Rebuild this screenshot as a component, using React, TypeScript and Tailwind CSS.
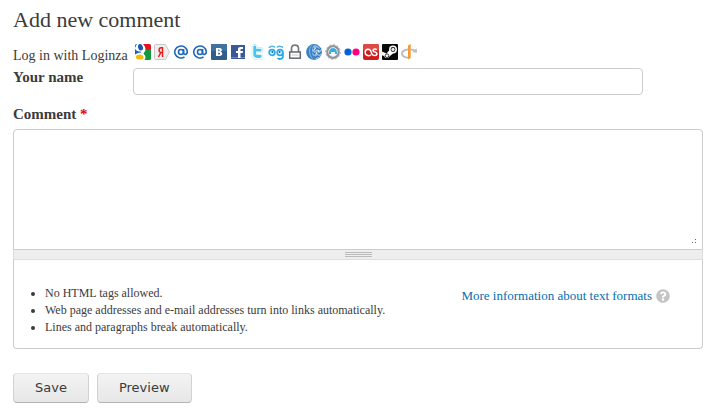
import type { ReactNode } from 'react'
import { FaQuestionCircle } from 'react-icons/fa'

const providers: { name: string; icon: ReactNode }[] = [
    {
        name: 'Google',
        icon: (
            <>
                <path d="M8 0h6.500A1.500 1.500 0 0 1 16 1.500V6h-5.500C10.500 3 9.500 1.500 8 0z" fill="#e8101c" />
                <path d="M10.500 5.500H16v9a1.500 1.500 0 0 1-1.500 1.500H9.500c1.500-2 1.200-4-.3-5.500-1-1-.5-1.700.3-2.500.8-.8 1-1.500 1-2.500z" fill="#109a3c" />
                <ellipse cx="5.500" cy="3.300" rx="2.400" ry="3.300" transform="rotate(-15 5.500 3.300)" fill="#1c57b0" />
                <path d="M0 4.500c.8 1.800 2.500 3 4.500 3 .8 0 1.500.3 1.700 1C4 8.500 2 9.200 0 10.500z" fill="#2360bd" />
                <path d="M0 1.500A1.500 1.500 0 0 1 1.500 0h.8C1.500.8 1 1.500.8 2.800L0 3.500z" fill="#2f6fc4" />
                <ellipse cx="4.700" cy="13" rx="3.800" ry="2.600" fill="#f9b80e" />
            </>
        ),
    },
    {
        name: 'Yandex',
        icon: (
            <>
                <path d="M1.500.5h10L15.500 8l-4 7.500h-10a1 1 0 0 1-1-1v-13a1 1 0 0 1 1-1z" fill="#efefef" stroke="#c9c9c9" />
                <path d="M8.500 3v10M8.500 3.700H7C4.500 3.700 4.500 8.500 7 8.500h1.500M6.800 8.500L4.500 13" fill="none" stroke="#ee1c1c" strokeWidth="1.500" />
            </>
        ),
    },
    { name: 'Mail.ru', icon: <AtSign /> },
    { name: 'Mail.ru Agent', icon: <AtSign /> },
    {
        name: 'VKontakte',
        icon: (
            <>
                <rect width="16" height="16" rx="1" fill="#315d88" />
                <rect width="16" height="7" rx="1" fill="#41719f" />
                <path d="M5 4h3.500c3 0 3 3.300.8 3.800 2.900.4 2.700 4.200-.6 4.200H5zM7.200 5.500v1.700h.8c1 0 1-1.700 0-1.700zM7.200 8.700v1.800h1c1.200 0 1.200-1.800 0-1.800z" fill="#fff" fillRule="evenodd" />
            </>
        ),
    },
    {
        name: 'Facebook',
        icon: (
            <>
                <rect x="1" y="1" width="14" height="14" fill="#3b5998" />
                <path d="M1 13h14v1H1z" fill="#6d84b4" />
                <path d="M8 14V9H6V7h2V5.500C8 3.700 9 3 10.500 3H13v2h-1.500c-.8 0-1 .3-1 1v1H13l-.3 2h-2.200v5z" fill="#fff" />
            </>
        ),
    },
    {
        name: 'Twitter',
        icon: (
            <>
                <path d="M5.500 3v7.500c0 1.800.8 2.700 2.500 2.700h3.500M5.500 6H11.500" fill="none" stroke="#cdebf4" strokeWidth="6" strokeLinecap="round" strokeLinejoin="round" />
                <path d="M5.500 3v7.500c0 1.800.8 2.700 2.500 2.700h3.500M5.500 6.200H11.500" fill="none" stroke="#f8feff" strokeWidth="4.400" strokeLinecap="round" />
                <path d="M5.700 3v7c0 1.800.8 2.500 2.500 2.500h3M5.700 6.200H11.200" fill="none" stroke="#4cc4ea" strokeWidth="2.800" strokeLinecap="round" />
            </>
        ),
    },
    {
        name: 'Loginza',
        icon: (
            <>
                <path d="M1 4C2 2 5.500 1.500 7 3.500M9 3.500C10 1.500 13 2 15 3.500" fill="none" stroke="#4db8ee" strokeWidth="1.600" />
                <circle cx="4" cy="8.500" r="2.800" fill="#f3fbff" stroke="#2ba9e9" strokeWidth="1.800" />
                <circle cx="12" cy="8.500" r="2.800" fill="#f3fbff" stroke="#2ba9e9" strokeWidth="1.800" />
                <path d="M14.900 8.500v4c0 2.700-4 3.200-5.400 1.500" fill="none" stroke="#2ba9e9" strokeWidth="1.800" />
                <circle cx="4.300" cy="8" r="1" fill="#176a9c" />
                <circle cx="11.700" cy="8" r="1" fill="#176a9c" />
            </>
        ),
    },
    {
        name: 'MyOpenID',
        icon: (
            <>
                <path d="M4.500 8V4.500C4.500 0 11.500 0 11.500 4.500V8" fill="none" stroke="#777b80" strokeWidth="1.700" />
                <rect x="2.700" y="8" width="10.600" height="6.200" fill="#fff" stroke="#64686e" strokeWidth="1.500" />
                <path d="M4.500 11h7" stroke="#c4c7cb" />
            </>
        ),
    },
    {
        name: 'WebMoney',
        icon: (
            <>
                <circle cx="8" cy="8" r="7.900" fill="#3b82c4" />
                <path d="M7.500 1.500c2.500-1 7.500 1.500 7.800 6.500.2 4-2.300 6.500-5 7C6 13.500 4.500 6 7.500 1.500z" fill="#8dbbe2" />
                <path d="M7 4l2 2 2-2 2 2 2-2M6.500 8l2.200 2 2.300-2 2.200 2L15.500 8M7.500 12l2 1.500 2-1.500 2 1" fill="none" stroke="#2f74b8" strokeWidth="1.100" />
                <path d="M8 6l1.500-2M10 10l1-2M12 6l1 2" fill="none" stroke="#e8f3fb" strokeWidth="1.100" />
                <path d="M5.500 1.500C2.500 5 3 11 6.500 14.500" fill="none" stroke="#9cc5e8" strokeWidth=".8" />
            </>
        ),
    },
    {
        name: 'Rambler',
        icon: (
            <>
                <circle cx="8" cy="8" r="5.800" fill="#f8f8f8" stroke="#8f9599" strokeWidth="2.200" />
                <circle cx="8" cy="8" r="7.300" fill="none" stroke="#a9aeb1" strokeDasharray="2 1.800" />
                <path d="M4 8.500a4 4.500 0 0 1 8 0V10H9.700V8h-3.400v2H4z" fill="#39aee2" />
                <path d="M6.300 8h3.400v3H6.300z" fill="#fff" />
            </>
        ),
    },
    {
        name: 'Flickr',
        icon: (
            <>
                <circle cx="4" cy="8" r="3.600" fill="#0063dc" />
                <circle cx="12" cy="8" r="3.600" fill="#ff0084" />
            </>
        ),
    },
    {
        name: 'Last.fm',
        icon: (
            <>
                <rect width="16" height="16" rx="2" fill="#cf1c20" />
                <rect width="16" height="7" rx="2" fill="#dc4a44" />
                <path d="M8 10.800C7 12 2.200 12.300 2.200 8.500S6.500 4.500 7.500 6.500L9 10c.8 2 5 2 5-.3 0-2.200-4-1-4-3.200 0-1.800 3-1.800 3.700-.5" fill="none" stroke="#fff" strokeWidth="1.500" />
            </>
        ),
    },
    {
        name: 'Steam',
        icon: (
            <>
                <rect width="16" height="16" rx="1" fill="#080808" />
                <path d="M0 7.500l4.500 2L7.500 6l4 3L8 12l-2 2H3.500L2 12l-2-.8z" fill="#fff" />
                <circle cx="11" cy="5.500" r="3.200" fill="#080808" stroke="#fff" strokeWidth="1.500" />
                <circle cx="11" cy="5.500" r="1.700" fill="#e6e6e6" />
                <circle cx="5" cy="11.700" r="1.800" fill="#fff" stroke="#222" strokeWidth=".9" />
            </>
        ),
    },
    {
        name: 'OpenID',
        icon: (
            <>
                <path d="M7.500 13.800C2.500 13.500.8 11.300 1 9.300 1.300 7 4 5.600 7 5.400M10 5.400c1.500.1 2.700.5 3.700 1.200" fill="none" stroke="#b9bec2" strokeWidth="2" />
                <path d="M11.500 8.200l4.500.6-.4-4.500z" fill="#b9bec2" />
                <path d="M7 1.500L9.700 0v14L7 15.500z" fill="#f39a32" />
            </>
        ),
    },
]

const tips = [
    'No HTML tags allowed.',
    'Web page addresses and e-mail addresses turn into links automatically.',
    'Lines and paragraphs break automatically.',
]

function AtSign() {
    return (
        <g fill="none" stroke="#1f69b4" strokeWidth="1.600">
            <circle cx="8" cy="8" r="2.500" />
            <path d="M10.600 5v4c0 2.200 3.700 2 3.700-1.500A6.300 6 0 1 0 11.500 13" />
        </g>
    )
}

function FormButton({ children }: { children: ReactNode }) {
    return (
        <button
            type="button"
            className="h-[30px] rounded border border-[#d2d2d2] border-t-[#e4e4e4] border-b-[#b4b4b4] bg-linear-to-b from-[#f3f3f3] to-[#e7e7e7] px-[21px] font-['DejaVu_Sans',sans-serif] text-[13px] text-[#3a3a3a]"
        >
            {children}
        </button>
    )
}

export default function App() {
    return (
        <main className="bg-white pt-2 pr-[11px] pl-[13px] font-['Liberation_Serif',serif] text-[15px] leading-5 text-[#3b3b3b]">
            <h2 className="text-[22px] leading-6">Add new comment</h2>

            <form>
                <div className="mt-3 flex gap-[2px]">
                    <span className="w-[120px] shrink-0 pt-[2px] text-[14px] whitespace-nowrap">Log in with Loginza</span>
                    <div className="flex gap-[3px]">
                        {providers.map((provider) => (
                            <a key={provider.name} href="#" aria-label={provider.name} className="block size-4">
                                <svg viewBox="0 0 16 16" className="size-4" aria-hidden="true">{provider.icon}</svg>
                            </a>
                        ))}
                    </div>
                </div>

                <div className="mt-[2px] flex">
                    <label htmlFor="name" className="w-[120px] shrink-0 leading-[18px] font-bold">Your name</label>
                    <input id="name" type="text" className="h-[27px] w-full max-w-[510px] rounded border border-[#ccc] px-1" />
                </div>

                <label htmlFor="comment" className="mt-[9px] block font-bold">
                    Comment <span className="text-red-600">*</span>
                </label>

                <div className="relative mt-[5px]">
                    <textarea id="comment" className="block h-[121px] w-full resize-none rounded-t border border-[#ccc] p-1" />
                    <svg viewBox="0 0 4 4" className="absolute right-[7px] bottom-[7px] size-1" aria-hidden="true">
                        <path d="M0 3h1v1H0zM3 3h1v1H3zM3 0h1v1H3z" fill="#666" />
                    </svg>
                </div>

                {/* Drag handle below the text area */}
                <div className="flex h-[10px] flex-col items-center justify-center gap-px border-x border-b border-[#ddd] bg-[#eee]">
                    <div className="h-px w-[27px] bg-[#bbb]" />
                    <div className="h-px w-[27px] bg-[#bbb]" />
                    <div className="h-px w-[27px] bg-[#bbb]" />
                </div>

                <div className="flex items-start justify-between rounded-b border border-t-0 border-[#ccc] pt-[25px] pr-8 pb-3 pl-[31px] text-[12px]">
                    <ul className="list-disc leading-[17px]">
                        {tips.map((tip) => (
                            <li key={tip}>{tip}</li>
                        ))}
                    </ul>
                    <a href="#" className="flex items-center gap-1 text-[13px] leading-[22px] text-[#0071b3]">
                        More information about text formats
                        <FaQuestionCircle className="size-[14px] text-[#c4c4c4]" />
                    </a>
                </div>

                <div className="mt-6 flex gap-2">
                    <FormButton>Save</FormButton>
                    <FormButton>Preview</FormButton>
                </div>
            </form>
        </main>
    )
}
